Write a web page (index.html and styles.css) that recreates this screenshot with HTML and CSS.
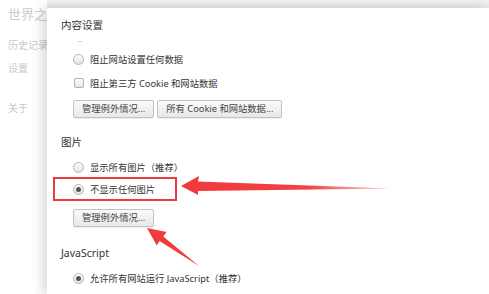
FILE: index.html
```html
<!DOCTYPE html>
<html lang="zh-CN">
<head>
<meta charset="utf-8">
<title>内容设置</title>
<link rel="stylesheet" href="styles.css">
</head>
<body>
<div class="page">
  <div class="page-title">世界之窗<span class="pt-2">设置</span></div>
  <ul class="nav">
    <li>历史记录</li>
    <li class="n2">设置</li>
    <li class="n3">关于</li>
  </ul>
</div>
<div class="band"></div>
<div class="dialog">
  <div class="sec-title">内容设置</div>
  <div class="frag"><span></span></div>
  <div class="opt"><span class="radio"></span>阻止网站设置任何数据</div>
  <div class="opt opt-cb"><span class="cb"></span>阻止第三方 Cookie 和网站数据</div>
  <div class="btns"><button class="btn">管理例外情况...</button><button class="btn">所有 Cookie 和网站数据...</button></div>

  <div class="sec-title s2">图片</div>
  <div class="opt first"><span class="radio"></span>显示所有图片（推荐）</div>
  <div class="opt"><span class="radio on"></span>不显示任何图片</div>
  <div class="btns b2"><button class="btn">管理例外情况...</button></div>

  <div class="sec-title s3">JavaScript</div>
  <div class="opt first"><span class="radio on"></span>允许所有网站运行 JavaScript（推荐）</div>
</div>
<svg class="annot" width="489" height="294" viewBox="0 0 489 294">
  <defs>
    <linearGradient id="fade" x1="181" y1="0" x2="392" y2="0" gradientUnits="userSpaceOnUse">
      <stop offset="0" stop-color="#f03a3c"/>
      <stop offset="0.6" stop-color="#f24244"/>
      <stop offset="1" stop-color="#f58a8a" stop-opacity="0.5"/>
    </linearGradient>
  </defs>
  <rect x="54" y="178" width="122" height="22" fill="none" stroke="#ec3b3e" stroke-width="2"/>
  <polygon points="181,186 199,176 198,181.5 392,188.5 198,191 198,195" fill="url(#fade)"/>
  <polygon points="147,228 166.5,232 163.3,236.5 199,266 159.5,241 156.8,245.5" fill="#f03a3c"/>
</svg>
</body>
</html>
```
FILE: styles.css
```css
html, body {
  margin: 0;
  padding: 0;
  background: #fff;
  width: 489px;
  height: 294px;
  overflow: hidden;
  font-family: "Noto Sans", "Noto Sans CJK SC", sans-serif;
}

.page {
  padding: 6px 8px;
}

.page-title {
  font-size: 13px;
  line-height: 16px;
  color: #cdcdcd;
  white-space: nowrap;
}

.pt-2 {
  margin-left: 40px;
}

.nav {
  list-style: none;
  margin: 16px 0 0;
  padding: 0;
  font-size: 10px;
  line-height: 14px;
  color: #c9c9c9;
}

.nav .n2 { margin-top: 9px; }
.nav .n3 { margin-top: 26px; }

.band {
  position: absolute;
  top: 0;
  left: 47px;
  right: 0;
  height: 8px;
  background: linear-gradient(rgba(238,238,238,0.85), rgba(228,228,228,0.95));
}

.dialog {
  position: absolute;
  top: 8px;
  left: 47px;
  right: 0;
  bottom: 0;
  background: #fff;
  box-shadow: -5px 0 10px rgba(0,0,0,0.14);
  padding: 10px 14px;
  color: #333;
}

.sec-title {
  font-size: 10.5px;
  line-height: 14px;
  height: 14px;
  color: #333;
}

.s2 { margin-top: 17px; }
.s3 { margin-top: 19px; }

.frag {
  height: 16px;
  box-sizing: border-box;
  padding: 9px 0 0 17px;
}

.frag span {
  display: block;
  width: 4px;
  height: 1px;
  background: #cfcfcf;
}

.opt {
  height: 22px;
  display: flex;
  align-items: center;
  padding-left: 12px;
  gap: 6px;
  font-size: 9.3px;
  color: #333;
  white-space: nowrap;
}

.opt.first { margin-top: 7px; }
.opt-cb { margin-top: 2px; }

.radio {
  width: 11px;
  height: 11px;
  box-sizing: border-box;
  border-radius: 50%;
  border: 1px solid #b4b4b4;
  background: linear-gradient(#fdfdfd, #e4e4e4);
  display: flex;
  align-items: center;
  justify-content: center;
  flex: none;
}

.radio.on::after {
  content: "";
  width: 5px;
  height: 5px;
  border-radius: 50%;
  background: #555;
}

.cb {
  width: 10px;
  height: 10px;
  box-sizing: border-box;
  margin-left: 1px;
  border: 1px solid #b4b4b4;
  border-radius: 2px;
  background: linear-gradient(#fdfdfd, #e6e6e6);
  flex: none;
}

.btns {
  margin-top: 6px;
  padding-left: 12px;
  display: flex;
  gap: 3px;
}

.btns.b2 { margin-top: 9px; }

.btn {
  height: 18px;
  box-sizing: border-box;
  padding: 0 8px;
  border: 1px solid #c2c2c2;
  border-radius: 2px;
  background: linear-gradient(#fafafa, #e8e8e8);
  box-shadow: 0 1px 0 rgba(0,0,0,0.06);
  font-family: "Noto Sans", "Noto Sans CJK SC", sans-serif;
  font-size: 9.3px;
  line-height: 16px;
  color: #444;
  white-space: nowrap;
}

.annot {
  position: absolute;
  top: 0;
  left: 0;
  pointer-events: none;
}
```
